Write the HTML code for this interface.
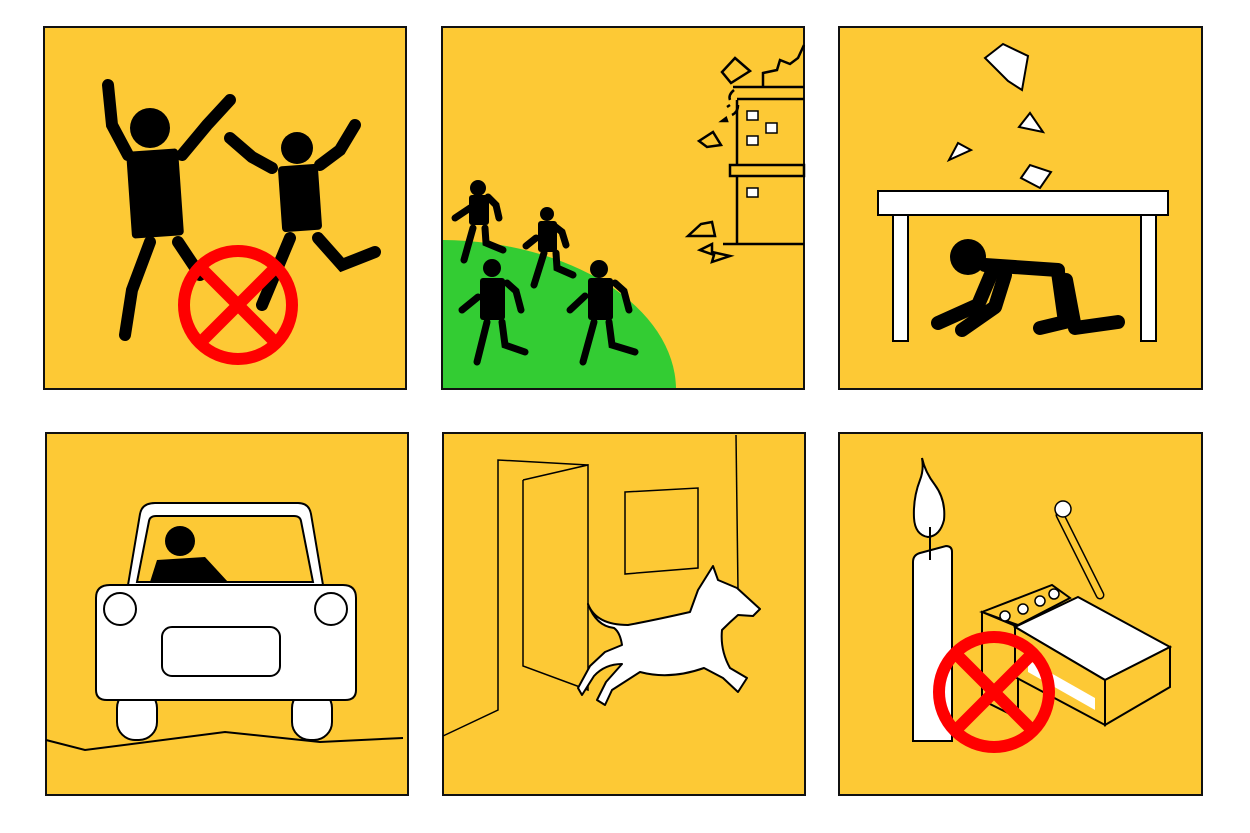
<!DOCTYPE html>
<html><head><meta charset="utf-8"><style>
html,body{margin:0;padding:0;background:#fff;width:1250px;height:833px;overflow:hidden}
svg{display:block}
</style></head><body>
<svg width="1250" height="833" viewBox="0 0 1250 833" xmlns="http://www.w3.org/2000/svg">
<g fill="#FDC935" stroke="#111" stroke-width="2">
<rect x="44" y="27" width="362" height="362"/>
<rect x="442" y="27" width="362" height="362"/>
<rect x="839" y="27" width="363" height="362"/>
<rect x="46" y="433" width="362" height="362"/>
<rect x="443" y="433" width="362" height="362"/>
<rect x="839" y="433" width="363" height="362"/>
</g>

<!-- Panel 1 -->
<g stroke="#000" stroke-width="12" stroke-linecap="round" fill="none">
<polyline points="108,85 112,125 128,155"/>
<polyline points="182,155 207,125 230,100"/>
<polyline points="150,242 132,290 125,335"/>
<polyline points="178,242 200,275"/>
<polyline points="272,168 252,157 230,138"/>
<polyline points="320,165 340,150 355,125"/>
<polyline points="290,238 262,305"/>
<polyline points="318,238 342,265 375,252"/>
</g>
<g fill="#000">
<circle cx="150" cy="128" r="20"/>
<rect x="129" y="150" width="52" height="87" rx="4" transform="rotate(-4 155 193)"/>
<circle cx="297" cy="148" r="16"/>
<rect x="280" y="165" width="40" height="66" rx="4" transform="rotate(-4 300 198)"/>
</g>
<g stroke="#f00" stroke-width="12" fill="none">
<circle cx="238" cy="305" r="54"/>
<line x1="200" y1="267" x2="276" y2="343"/><line x1="276" y1="267" x2="200" y2="343"/>
</g>

<!-- Panel 2 -->
<path d="M443,240 A236,150 0 0 1 676,388 L443,388 Z" fill="#33CC33"/>
<g stroke="#000" stroke-width="7" stroke-linecap="round" fill="none">
<polyline points="455,218 470,208"/><polyline points="488,197 496,205 499,218"/>
<polyline points="473,228 464,260"/><polyline points="485,228 486,243 503,250"/>
<polyline points="526,246 536,238"/><polyline points="553,225 562,232 566,245"/>
<polyline points="544,253 534,285"/><polyline points="556,253 557,268 573,275"/>
<polyline points="462,310 478,297"/><polyline points="507,283 516,291 521,310"/>
<polyline points="487,322 477,362"/><polyline points="502,322 505,345 525,352"/>
<polyline points="570,310 585,296"/><polyline points="615,283 624,291 629,310"/>
<polyline points="594,322 583,362"/><polyline points="609,322 612,345 635,352"/>
</g>
<g fill="#000">
<circle cx="478" cy="188" r="8"/><rect x="469" y="195" width="20" height="30" rx="3"/>
<circle cx="547" cy="214" r="7"/><rect x="538" y="221" width="19" height="31" rx="3"/>
<circle cx="492" cy="268" r="9"/><rect x="480" y="278" width="25" height="42" rx="3"/>
<circle cx="599" cy="269" r="9"/><rect x="588" y="278" width="25" height="42" rx="3"/>
</g>
<g stroke="#000" stroke-width="2.5" fill="none">
<line x1="737" y1="100" x2="737" y2="244"/>
<line x1="733" y1="87" x2="804" y2="87"/><line x1="737" y1="99" x2="804" y2="99"/>
<rect x="730" y="165" width="74" height="11" fill="#FDC935"/>
<line x1="723" y1="244" x2="804" y2="244"/>
<polyline points="763,87 763,73 777,70 780,60 790,64 798,58 804,45"/>
<polygon points="735,58 750,71 731,83 722,72"/>
<polygon points="699,141 713,132 721,145 707,147"/>
<polygon points="688,236 701,224 712,222 715,236"/>
<polygon points="700,250 712,244 712,252 730,256 712,262 714,255"/>
<path d="M734,90 Q728,95 730,100 M732,115 Q738,112 738,105 M727,107 l3,-2 M722,121 l4,-3 l1,3z"/>
</g>
<g fill="#fff" stroke="#000" stroke-width="1.5">
<rect x="747" y="111" width="11" height="9"/><rect x="766" y="123" width="11" height="10"/>
<rect x="747" y="136" width="11" height="9"/><rect x="747" y="188" width="11" height="9"/>
</g>

<!-- Panel 3 -->
<g fill="#fff" stroke="#000" stroke-width="2">
<rect x="878" y="191" width="290" height="24"/>
<rect x="893" y="215" width="15" height="126"/>
<rect x="1141" y="215" width="15" height="126"/>
<polygon points="985,58 1003,44 1028,56 1022,90 1008,81"/>
<polygon points="1019,127 1030,113 1043,132"/>
<polygon points="949,160 958,143 971,150"/>
<polygon points="1021,178 1030,165 1051,172 1040,188"/>
</g>
<g stroke="#000" stroke-width="14" stroke-linecap="round" stroke-linejoin="round" fill="none">
<polyline points="985,265 1058,270"/>
<polyline points="992,272 978,305 938,323"/>
<polyline points="1005,275 995,307 962,330"/>
<polyline points="1058,272 1065,322 1040,328"/>
<polyline points="1066,280 1075,328 1118,322"/>
</g>
<circle cx="968" cy="257" r="18" fill="#000"/>

<!-- Panel 4 -->
<g stroke="#000" stroke-width="2" fill="#fff">
<rect x="117" y="690" width="40" height="50" rx="18"/>
<rect x="292" y="690" width="40" height="50" rx="18"/>
<path d="M128,585 L140,514 Q142,503 155,503 L298,503 Q309,503 311,514 L323,585 Z"/>
<path d="M96,598 Q96,585 110,585 L343,585 Q356,585 356,598 L356,690 Q356,700 345,700 L107,700 Q96,700 96,690 Z"/>
</g>
<path d="M137,582 L149,521 Q150,516 156,516 L294,516 Q300,516 301,521 L313,582 Z" fill="#FDC935" stroke="#000" stroke-width="2"/>
<circle cx="180" cy="541" r="15" fill="#000"/>
<path d="M150,582 L157,560 L205,557 L228,582 Z" fill="#000"/>
<g fill="#fff" stroke="#000" stroke-width="2">
<circle cx="120" cy="609" r="16"/><circle cx="331" cy="609" r="16"/>
<rect x="162" y="627" width="118" height="49" rx="10"/>
</g>
<polyline points="46,740 85,750 225,732 320,742 403,738" fill="none" stroke="#000" stroke-width="2"/>

<!-- Panel 5 -->
<g stroke="#000" stroke-width="1.5" fill="none">
<polyline points="443,736 498,710 498,460 588,465"/>
<polyline points="523,480 588,465 588,690 523,666 523,480"/>
<line x1="736" y1="435" x2="738" y2="590"/>
<polygon points="625,492 698,488 698,568 625,574"/>
</g>
<path d="M588,604 Q596,625 628,625 Q655,620 690,612 L698,590 L713,566 L718,580 L737,588 L760,609 L753,616 L738,615 Q730,622 722,630 Q720,650 730,668 L747,678 L738,692 L723,678 L704,668 Q670,680 640,672 L612,690 L605,705 L597,700 L606,682 L622,664 Q605,664 594,676 L582,695 L578,688 L590,666 L605,652 L622,645 Q620,632 614,628 Q596,626 588,604 Z" fill="#fff" stroke="#000" stroke-width="2" stroke-linejoin="round"/>

<!-- Panel 6 -->
<g stroke="#000" stroke-width="2">
<path d="M913,562 Q913,555 920,553 L946,546 Q952,546 952,552 L952,741 L913,741 Z" fill="#fff"/>
<path d="M922,458 Q925,472 935,485 Q946,500 944,520 Q940,536 928,537 Q915,535 914,518 Q913,498 920,480 Q924,470 922,458 Z" fill="#fff"/>
<line x1="930" y1="527" x2="930" y2="560"/>
<polygon points="982,612 1052,585 1070,598 1018,625" fill="#FDC935"/>
<polygon points="982,612 1018,627 1018,718 982,700" fill="#FDC935"/>
<polygon points="1015,627 1078,597 1170,647 1105,680" fill="#fff"/>
<polygon points="1015,627 1105,680 1105,725 1015,677" fill="#FDC935"/>
<polygon points="1105,680 1170,647 1170,687 1105,725" fill="#FDC935"/>
<line x1="1060" y1="515" x2="1100" y2="595" stroke-width="9" stroke-linecap="round"/>
</g>
<line x1="1060" y1="515" x2="1100" y2="595" stroke="#FDC935" stroke-width="6" stroke-linecap="round"/>
<polygon points="1028,660 1095,698 1095,710 1028,672" fill="#fff"/>
<g fill="#fff" stroke="#000" stroke-width="1.5">
<circle cx="1063" cy="509" r="8"/>
<circle cx="1005" cy="616" r="5"/><circle cx="1023" cy="609" r="5"/>
<circle cx="1040" cy="601" r="5"/><circle cx="1054" cy="594" r="5"/>
</g>
<g stroke="#f00" stroke-width="12" fill="none">
<circle cx="994" cy="692" r="55"/>
<line x1="956" y1="654" x2="1032" y2="730"/><line x1="1032" y1="654" x2="956" y2="730"/>
</g>
</svg>
</body></html>
